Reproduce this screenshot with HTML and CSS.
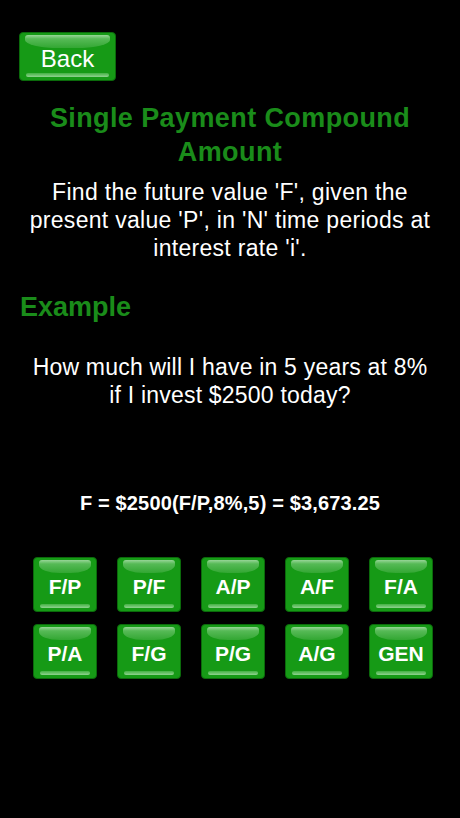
FILE: index.html
```html
<!DOCTYPE html>
<html lang="en">
<head>
  <meta charset="UTF-8">
  <title>Single Payment Compound Amount</title>
  <link rel="stylesheet" href="styles.css">
</head>
<body>
  <div class="screen">
    <button class="glossy back-btn">Back</button>

    <div class="title">Single Payment Compound<br>Amount</div>
    <div class="desc">Find the future value 'F', given the present value 'P', in 'N' time periods at interest rate 'i'.</div>

    <div class="heading">Example</div>
    <div class="question">How much will I have in 5 years at 8%<br>if I invest $2500 today?</div>

    <div class="formula">F = $2500(F/P,8%,5) = $3,673.25</div>

    <div class="grid">
      <button class="glossy key">F/P</button>
      <button class="glossy key">P/F</button>
      <button class="glossy key">A/P</button>
      <button class="glossy key">A/F</button>
      <button class="glossy key">F/A</button>
      <button class="glossy key">P/A</button>
      <button class="glossy key">F/G</button>
      <button class="glossy key">P/G</button>
      <button class="glossy key">A/G</button>
      <button class="glossy key">GEN</button>
    </div>
  </div>
</body>
</html>
```

FILE: styles.css
```css
body {
  margin: 0;
  background: black;
  color: white;
  font-family: "Liberation Sans", Arial, sans-serif;
}
.screen {
  display: flex;
  flex-direction: column;
  padding-top: 32px;
}
.glossy {
  position: relative;
  background: #169a16;
  border: 1px solid #0b6a0b;
  border-radius: 4px;
  color: white;
  font-family: inherit;
  padding: 0;
  cursor: pointer;
  overflow: hidden;
}
.glossy::before {
  content: "";
  position: absolute;
  left: 5px;
  right: 5px;
  top: 2px;
  height: 13px;
  border-radius: 3px 3px 40% 40% / 3px 3px 8px 8px;
  background: linear-gradient(#b8e4b8, #66c266 30%, #3aaa3a);
  opacity: 0.8;
}
.glossy::after {
  content: "";
  position: absolute;
  left: 6px;
  right: 6px;
  bottom: 3px;
  height: 4px;
  border-radius: 3px;
  background: linear-gradient(#4fb84f, #aee0ae);
  opacity: 0.8;
}
.back-btn {
  margin-left: 19px;
  width: 97px;
  height: 49px;
  font-size: 24px;
  padding-top: 4px;
}
.title {
  margin-top: 20px;
  font-size: 27px;
  line-height: 34px;
  letter-spacing: 0.4px;
  font-weight: bold;
  color: #1a8c1a;
  text-align: center;
}
.desc {
  margin: 9px 16px 0;
  font-size: 23px;
  line-height: 28px;
  letter-spacing: 0.3px;
  text-align: center;
}
.heading {
  margin: 28px 0 0 20px;
  font-size: 27px;
  line-height: 34px;
  font-weight: bold;
  color: #1a8c1a;
}
.question {
  margin-top: 29px;
  font-size: 23px;
  line-height: 28px;
  letter-spacing: 0.2px;
  text-align: center;
}
.formula {
  margin-top: 82px;
  font-size: 20px;
  line-height: 24px;
  letter-spacing: 0.15px;
  font-weight: bold;
  text-align: center;
}
.grid {
  margin: 42px 0 0 33px;
  display: grid;
  grid-template-columns: repeat(5, 64px);
  column-gap: 20px;
  row-gap: 12px;
}
.key {
  height: 55px;
  font-size: 21px;
  font-weight: bold;
  padding-top: 5px;
}
```
